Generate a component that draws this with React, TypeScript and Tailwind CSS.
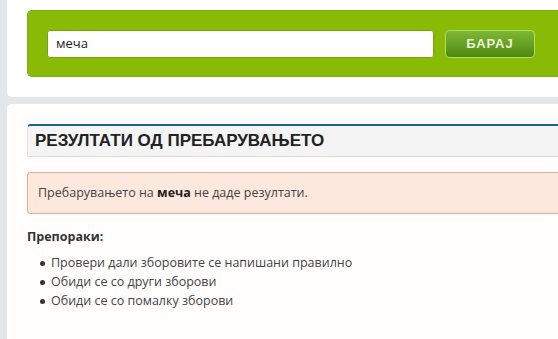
export default function App() {
  const suggestions = [
    'Провери дали зборовите се напишани правилно',
    'Обиди се со други зборови',
    'Обиди се со помалку зборови',
  ]

  return (
    <div className="h-[339px] w-[558px] overflow-hidden bg-[#e4e7e9] pl-[7px] font-['Open_Sans',sans-serif]">
      <div className="h-[97px] rounded-bl-[5px] bg-white pl-[20px] pt-[10px]">
        <div className="flex h-[67px] items-center gap-[11px] rounded-l-[5px] border border-r-0 border-[#7fae08] bg-[#89ba06] pl-[19px]">
          <div className="flex h-[28px] w-[387px] items-center rounded-[3px] border border-[#76a30a] bg-white pl-[8px] text-[13px] text-[#222]">
            меча
          </div>
          <button
            type="button"
            className="h-[28px] w-[90px] rounded-[4px] border border-[#b3dd5c] bg-gradient-to-b from-[#7fb735] to-[#4e8a10] font-['Liberation_Sans',sans-serif] text-[13px] font-bold tracking-[1px] text-[#e9f6d6]"
          >
            БАРАЈ
          </button>
        </div>
      </div>

      <div className="mt-[7px] h-[240px] rounded-tl-[5px] bg-[#fffefd] pl-[20px] pt-[20px]">
        <div className="flex h-[33px] items-center rounded-tl-[4px] border-t-2 border-b border-l border-t-[#1d6585] border-b-[#dcdcdc] border-l-[#e4e4e4] bg-[#f4f4f4] pl-[7px]">
          <h2 className="font-['Liberation_Sans',sans-serif] text-[17px] font-bold text-[#222]">
            РЕЗУЛТАТИ ОД ПРЕБАРУВАЊЕТО
          </h2>
        </div>

        <div className="mt-[15px] flex h-[42px] items-center rounded-l-[4px] border border-r-0 border-[#e5ae93] bg-[#fde8de] pl-[10px] text-[12.5px] text-[#444]">
          <p>
            Пребарувањето на <b className="text-[#222]">меча</b> не даде резултати.
          </p>
        </div>

        <p className="mt-[14px] text-[12.5px] font-bold text-[#333]">Препораки:</p>
        <ul className="mt-[7px] pl-[13px] text-[12.5px] text-[#444]">
          {suggestions.map(s => (
            <li key={s} className="flex h-[19px] items-center gap-[6px]">
              <span className="h-[5px] w-[5px] rounded-full bg-[#333]" />
              {s}
            </li>
          ))}
        </ul>
      </div>
    </div>
  )
}
